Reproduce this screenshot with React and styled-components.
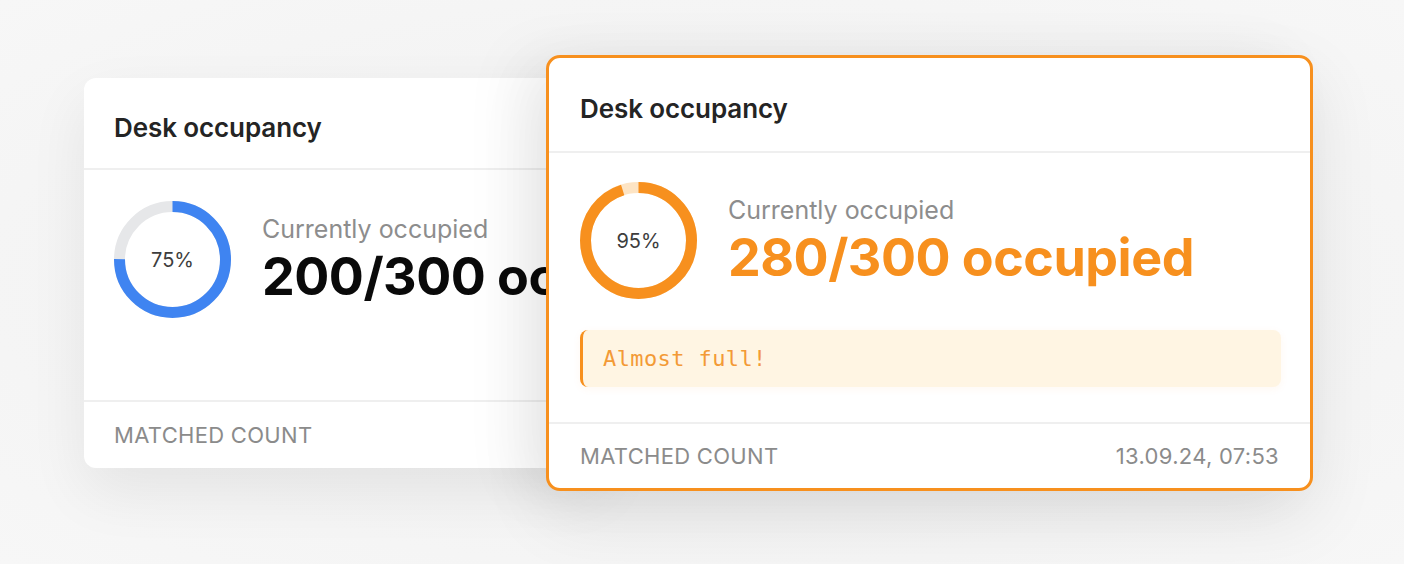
import React from "react";
import styled, { createGlobalStyle } from "styled-components";

const GlobalStyle = createGlobalStyle`
  html, body {
    margin: 0;
    padding: 0;
    background: #f4f4f4;
  }
  body {
    font-family: Inter, "Noto Sans", "Liberation Sans", sans-serif;
    -webkit-font-smoothing: antialiased;
  }
`;

const ORANGE = "#f7901e";
const BLUE = "#3f84f1";

const Ring = ({ percent, color, track }) => {
  const size = 117;
  const stroke = 11;
  const r = (size - stroke) / 2;
  const c = 2 * Math.PI * r;
  return (
    <RingBox>
      <svg width={size} height={size} viewBox={`0 0 ${size} ${size}`}>
        <circle cx={size / 2} cy={size / 2} r={r} fill="none" stroke={track} strokeWidth={stroke} />
        <circle
          cx={size / 2}
          cy={size / 2}
          r={r}
          fill="none"
          stroke={color}
          strokeWidth={stroke}
          strokeDasharray={`${(c * percent) / 100} ${c}`}
          transform={`rotate(-90 ${size / 2} ${size / 2})`}
        />
      </svg>
      <RingLabel>{percent}%</RingLabel>
    </RingBox>
  );
};

const OccupancyCard = ({ front, percent, value, alert, date }) => (
  <Card $front={front}>
    <Header $front={front}>
      <Title>Desk occupancy</Title>
    </Header>
    <Body $front={front}>
      <Stat>
        <Ring
          percent={percent}
          color={front ? ORANGE : BLUE}
          track={front ? "#fde4c4" : "#e6e7e9"}
        />
        <StatText>
          <Label>Currently occupied</Label>
          <Value $color={front ? ORANGE : "#0a0a0a"}>{value}</Value>
        </StatText>
      </Stat>
      {alert && <Alert>{alert}</Alert>}
    </Body>
    <Footer $front={front}>
      <FooterText>MATCHED COUNT</FooterText>
      {date && <FooterText>{date}</FooterText>}
    </Footer>
  </Card>
);

export default function App() {
  return (
    <>
      <GlobalStyle />
      <Page>
        <Stack>
          <OccupancyCard percent={75} value="200/300 oc" />
          <OccupancyCard
            front
            percent={95}
            value="280/300 occupied"
            alert="Almost full!"
            date="13.09.24, 07:53"
          />
        </Stack>
      </Page>
    </>
  );
}

const Page = styled.div`
  width: 1404px;
  height: 564px;
  box-sizing: border-box;
  padding: 55px 0 0 84px;
  overflow: hidden;
  background: radial-gradient(ellipse at 50% 50%, #eeeeee 0%, #f3f3f3 45%, #f7f7f7 100%);
`;

const Stack = styled.div`
  display: flex;
  align-items: flex-start;
`;

const Card = styled.div`
  box-sizing: border-box;
  display: flex;
  flex-direction: column;
  background: #ffffff;
  overflow: hidden;
  flex-shrink: 0;
  width: ${({ $front }) => ($front ? "767px" : "520px")};
  height: ${({ $front }) => ($front ? "436px" : "390px")};
  margin-top: ${({ $front }) => ($front ? "0" : "23px")};
  margin-left: ${({ $front }) => ($front ? "-58px" : "0")};
  border: ${({ $front }) => ($front ? `3px solid ${ORANGE}` : "none")};
  border-radius: ${({ $front }) => ($front ? "14px" : "12px")};
  position: relative;
  z-index: ${({ $front }) => ($front ? 2 : 1)};
  box-shadow: ${({ $front }) =>
    $front
      ? "0 24px 70px rgba(0, 0, 0, 0.09), -30px 0 60px rgba(0, 0, 0, 0.05)"
      : "0 24px 60px rgba(0, 0, 0, 0.07)"};
`;

const Header = styled.div`
  padding: ${({ $front }) => ($front ? "36px 31px 27px" : "35px 30px 25px")};
  border-bottom: 2px solid #efefef;
`;

const Title = styled.h2`
  margin: 0;
  font-size: 26px;
  line-height: 30px;
  font-weight: 600;
  color: #242424;
  letter-spacing: -0.1px;
`;

const Body = styled.div`
  flex: 1;
  display: flex;
  flex-direction: column;
  gap: 31px;
  padding: ${({ $front }) => ($front ? "29px 29px 0 31px" : "31px 30px 0")};
`;

const Stat = styled.div`
  display: flex;
  align-items: center;
  gap: 31px;
`;

const RingBox = styled.div`
  position: relative;
  width: 117px;
  height: 117px;
  flex-shrink: 0;
  svg {
    display: block;
  }
`;

const RingLabel = styled.span`
  position: absolute;
  inset: 0;
  display: flex;
  align-items: center;
  justify-content: center;
  font-size: 20px;
  color: #3d3d3d;
`;

const StatText = styled.div`
  display: flex;
  flex-direction: column;
  gap: 5px;
  white-space: nowrap;
`;

const Label = styled.span`
  font-size: 25px;
  line-height: 30px;
  color: #8d8d8d;
`;

const Value = styled.span`
  font-size: 52px;
  line-height: 56px;
  font-weight: 700;
  letter-spacing: -0.5px;
  color: ${({ $color }) => $color};
`;

const Alert = styled.div`
  height: 57px;
  display: flex;
  align-items: center;
  padding-left: 20px;
  border-left: 3px solid ${ORANGE};
  border-radius: 8px;
  background: #fff5e3;
  box-shadow: 0 2px 8px rgba(247, 144, 30, 0.06);
  font-family: "DejaVu Sans Mono", "Liberation Mono", monospace;
  font-size: 22px;
  letter-spacing: 0.4px;
  color: #f39a36;
`;

const Footer = styled.div`
  display: flex;
  justify-content: space-between;
  align-items: center;
  height: ${({ $front }) => ($front ? "66px" : "68px")};
  box-sizing: border-box;
  padding: ${({ $front }) => ($front ? "0 31px" : "0 30px")};
  border-top: 2px solid #efefef;
`;

const FooterText = styled.span`
  font-size: 22px;
  color: #8b8b8b;
  letter-spacing: 0.3px;
`;
